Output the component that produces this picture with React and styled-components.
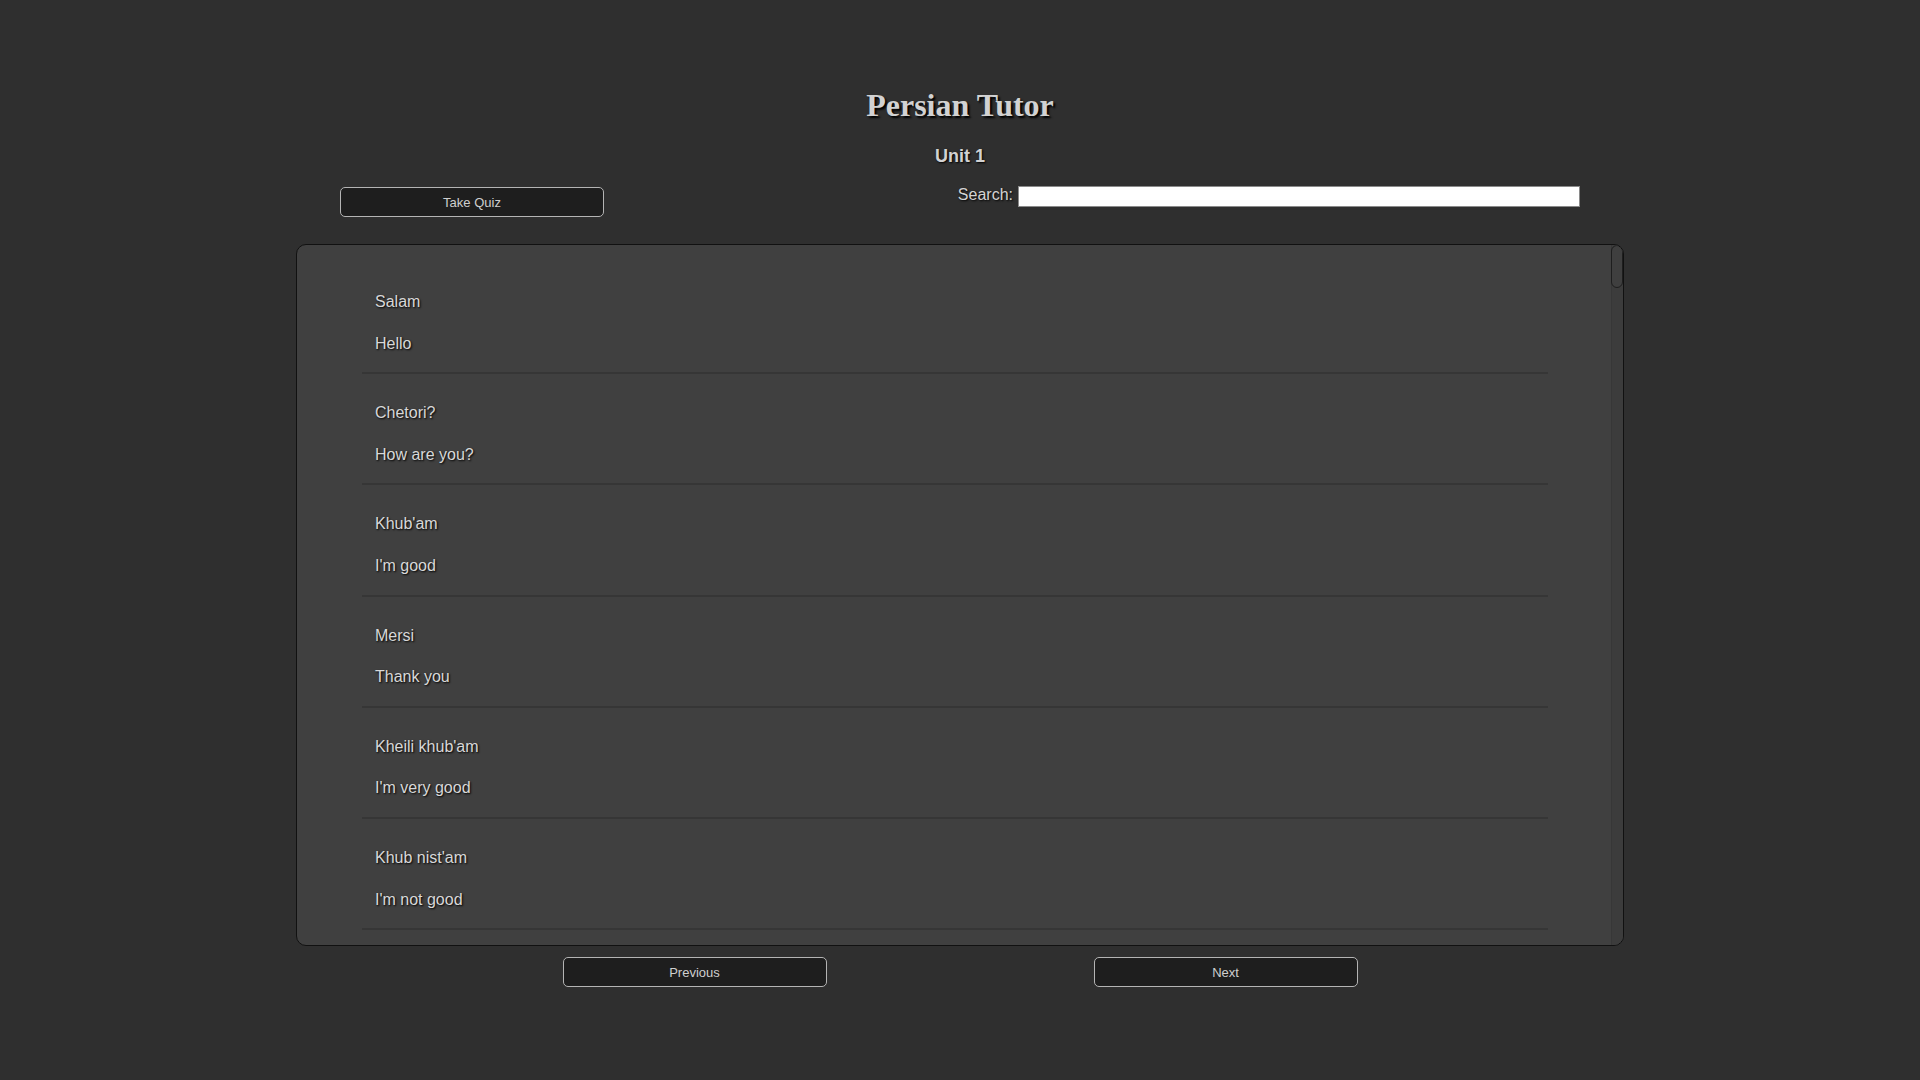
import React, { useState } from "react";
import styled, { createGlobalStyle } from "styled-components";

const GlobalStyle = createGlobalStyle`
  html, body {
    margin: 0;
    background-color: #2f2f2f;
    font-family: "Liberation Sans", Arial, sans-serif;
    color: #d4d4d4;
  }
`;

const phrases = [
  ["Salam", "Hello"],
  ["Chetori?", "How are you?"],
  ["Khub'am", "I'm good"],
  ["Mersi", "Thank you"],
  ["Kheili khub'am", "I'm very good"],
  ["Khub nist'am", "I'm not good"],
  ["Bad nistam", "I'm not bad"],
  ["Shoma chetorid?", "How are you? (formal)"],
  ["Esmet chie?", "What is your name?"],
  ["Esmam ... ast", "My name is ..."],
  ["Khoshbakhtam", "Nice to meet you"],
  ["Khodahafez", "Goodbye"],
  ["Shab bekheir", "Good night"],
  ["Sobh bekheir", "Good morning"],
  ["Baleh", "Yes"],
  ["Na", "No"],
  ["Lotfan", "Please"],
  ["Bebakhshid", "Excuse me"],
  ["Khahesh mikonam", "You're welcome"],
  ["Ahl-e koja hasti?", "Where are you from?"],
  ["Man ahl-e Iran hastam", "I am from Iran"],
  ["Farsi baladi?", "Do you speak Persian?"],
  ["Kami", "A little"],
  ["Motevajeh nemisham", "I don't understand"],
  ["Dobareh begoo", "Say it again"],
  ["Yavash tar", "Slower"],
  ["Che khabar?", "What's new?"],
  ["Hich", "Nothing"],
  ["Ba'dan mibinamet", "See you later"],
  ["Movafagh bashi", "Good luck"],
  ["Dust", "Friend"],
  ["Khanevadeh", "Family"],
  ["Madar", "Mother"],
  ["Pedar", "Father"],
  ["Baradar", "Brother"],
  ["Khahar", "Sister"],
  ["Ab", "Water"],
  ["Chai", "Tea"],
  ["Nan", "Bread"],
  ["Ghaza", "Food"],
  ["Khaneh", "House"],
  ["Madreseh", "School"],
  ["Ketab", "Book"],
  ["Emruz", "Today"],
  ["Farda", "Tomorrow"],
  ["Diruz", "Yesterday"],
  ["Alan", "Now"],
  ["Inja", "Here"],
  ["Unja", "There"],
  ["Kheili mamnun", "Thank you very much"],
];

const Page = styled.div`
  width: 1328px;
  margin: 0 auto;
  padding-top: 87px;
  display: flex;
  flex-direction: column;
  align-items: center;
`;

const Title = styled.h1`
  margin: 0;
  font-family: "Liberation Serif", "Times New Roman", serif;
  font-size: 32px;
  font-weight: bold;
  line-height: 37px;
  color: #d2d2d2;
  text-shadow: 2px 2px 2px #000;
`;

const Subtitle = styled.h3`
  margin: 22px 0 0;
  font-size: 18px;
  font-weight: bold;
  line-height: 21px;
  color: #d2d2d2;
  text-shadow: 1px 1px 2px #000;
`;

const Toolbar = styled.div`
  align-self: stretch;
  display: flex;
  justify-content: space-between;
  align-items: flex-start;
  padding: 0 44px;
  margin-top: 19px;
`;

const Button = styled.button`
  width: 264px;
  height: 30px;
  margin-top: ${(p) => p.$offset || 0}px;
  background-color: #1e1e1e;
  border: 1px solid #b4b4b4;
  border-radius: 5px;
  color: #cfcfcf;
  font-family: "Liberation Sans", Arial, sans-serif;
  font-size: 13px;
  cursor: pointer;
`;

const SearchGroup = styled.label`
  display: flex;
  align-items: flex-start;
  font-size: 16px;
  line-height: 18px;
  color: #d4d4d4;
  text-shadow: 1px 1px 2px #000;
`;

const SearchInput = styled.input`
  box-sizing: border-box;
  width: 562px;
  height: 21px;
  margin: 0 0 0 5px;
  padding: 1px 4px;
  background: #fff;
  border: 1px solid #8a8a8a;
  font-family: "Liberation Sans", Arial, sans-serif;
  font-size: 13px;
  outline: none;
`;

const Panel = styled.div`
  box-sizing: border-box;
  display: flex;
  width: 1328px;
  height: 702px;
  margin-top: 27px;
  background-color: #404040;
  border: 1px solid #111;
  border-radius: 10px;
  overflow: hidden;
`;

const ScrollArea = styled.div`
  flex: 1;
  overflow-y: auto;
  scrollbar-width: none;

  &::-webkit-scrollbar {
    display: none;
  }
`;

const Track = styled.div`
  box-sizing: border-box;
  flex: 0 0 12px;
  background-color: #3c3c3c;
  border-left: 1px solid #373737;
`;

const Thumb = styled.div`
  box-sizing: border-box;
  height: 43px;
  margin-left: -1px;
  background-color: #3f3f3f;
  border: 1px solid #1e1e1e;
  border-radius: 6px;
`;

const List = styled.ul`
  list-style: none;
  margin: 0 63px 0 65px;
  padding: 18px 0 0;
`;

const Item = styled.li`
  display: flex;
  flex-direction: column;
  gap: 23.6px;
  padding: 30px 13px 19.6px;
  border-bottom: 2px solid #363636;
`;

const Line = styled.span`
  font-size: 16px;
  line-height: 18px;
  color: #d8d8d8;
  text-shadow: 1px 1px 2px #000;
`;

const Pager = styled.div`
  display: flex;
  justify-content: center;
  gap: 267px;
  margin-top: 11px;
`;

export default function App() {
  const [query, setQuery] = useState("");
  const shown = phrases.filter(([fa, en]) =>
    (fa + " " + en).toLowerCase().includes(query.toLowerCase())
  );

  return (
    <>
      <GlobalStyle />
      <Page>
        <Title>Persian Tutor</Title>
        <Subtitle>Unit 1</Subtitle>
        <Toolbar>
          <Button $offset={1}>Take Quiz</Button>
          <SearchGroup>
            Search:
            <SearchInput
              type="text"
              value={query}
              onChange={(e) => setQuery(e.target.value)}
            />
          </SearchGroup>
        </Toolbar>
        <Panel>
          <ScrollArea>
            <List>
              {shown.map(([fa, en]) => (
                <Item key={fa}>
                  <Line>{fa}</Line>
                  <Line>{en}</Line>
                </Item>
              ))}
            </List>
          </ScrollArea>
          <Track>
            <Thumb />
          </Track>
        </Panel>
        <Pager>
          <Button>Previous</Button>
          <Button>Next</Button>
        </Pager>
      </Page>
    </>
  );
}
